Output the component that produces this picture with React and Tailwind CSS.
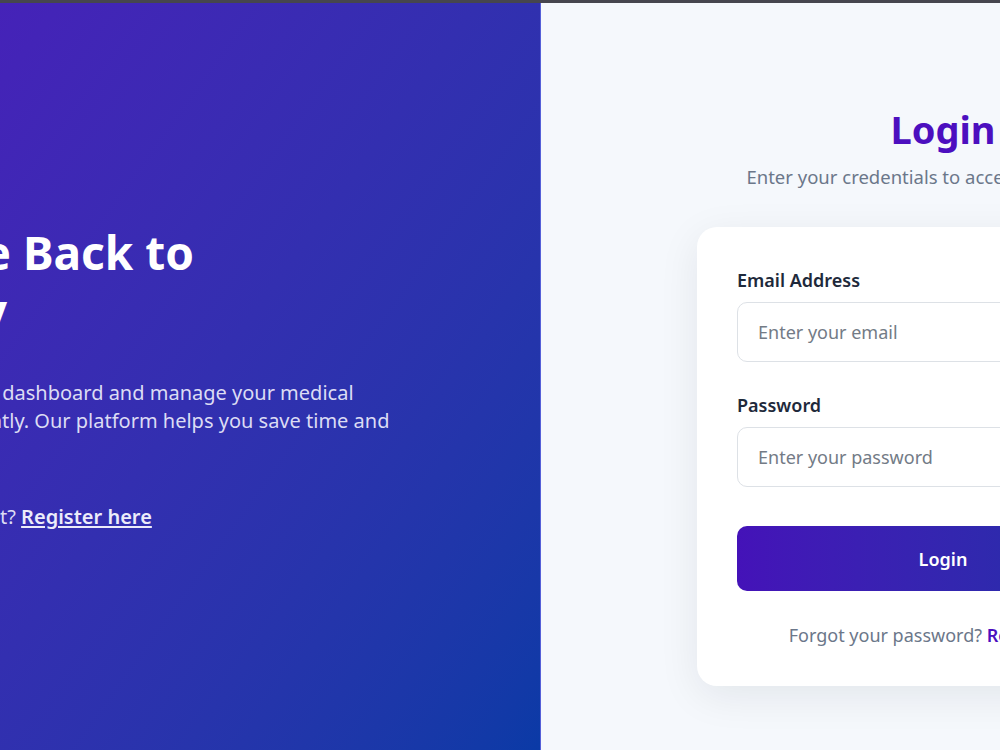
import React from 'react';

export default function App() {
  return (
    <div className="w-[1000px] h-[750px] overflow-hidden flex flex-col font-['Noto_Sans',sans-serif]">
      {/* thin top bar */}
      <div className="h-[3px] shrink-0 bg-[#46464e]" />

      <div className="flex flex-1 min-h-0">
        {/* Left welcome panel */}
        <div className="w-[541px] shrink-0 overflow-hidden flex flex-col justify-center bg-linear-to-br from-[#4522b8] to-[#0a3aa6] border-r border-[#5560d8]">
          <div className="-ml-[300px] text-white whitespace-nowrap">
            <h1 className="text-[46px] font-bold leading-[58px]">
              <div>
                <span className="inline-block w-[311px] text-right">Welcome</span> Back to
              </div>
              <div>
                <span className="inline-block w-[307px] text-right">Pharmacy</span>
              </div>
            </h1>

            <p className="mt-10 text-xl leading-7 text-[#dcdcf4]">
              <span className="block">
                <span className="inline-block w-[297px] text-right">Log in to access your</span> dashboard and manage your medical
              </span>
              <span className="block">
                <span className="inline-block w-[302px] text-right">records efficien</span>tly. Our platform helps you save time and
              </span>
              <span className="block">
                <span className="inline-block w-[296px] text-right">effort.</span>
              </span>
            </p>

            <p className="mt-10 text-xl leading-7 text-[#dcdcf4]">
              <span className="inline-block w-[300px] text-right">Don't have an accoun</span>t?{' '}
              <a href="#" className="font-semibold text-[#ececfa] underline underline-offset-2">
                Register here
              </a>
            </p>
          </div>
        </div>

        {/* Right login panel */}
        <div className="w-[804px] shrink-0 bg-[#f5f8fc] flex flex-col items-center pt-[102px]">
          <h2 className="text-[38px] font-bold leading-[48px] text-[#4c0fbf]">Login</h2>
          <p className="mt-[10px] text-[18.5px] leading-7 text-[#6b778a]">
            Enter your credentials to access your account
          </p>

          <div className="mt-9 w-[492px] bg-white rounded-[20px] shadow-[0_10px_40px_rgba(15,23,42,0.08)] px-10 pt-10 pb-[37px]">
            <label className="block text-lg font-semibold leading-[27px] text-[#1e293b]">Email Address</label>
            <input
              type="email"
              placeholder="Enter your email"
              className="mt-2 block w-full h-[60px] px-5 text-lg rounded-[10px] border border-[#dde1e6] bg-white outline-none placeholder:text-[#737b86]"
            />

            <label className="mt-[30px] block text-lg font-semibold leading-[27px] text-[#1e293b]">Password</label>
            <input
              type="password"
              placeholder="Enter your password"
              className="mt-2 block w-full h-[60px] px-5 text-lg rounded-[10px] border border-[#dde1e6] bg-white outline-none placeholder:text-[#737b86]"
            />

            <button className="mt-[39px] w-full h-[65px] rounded-[10px] bg-linear-to-r from-[#4412b8] to-[#1d31a7] text-white text-lg font-semibold">
              Login
            </button>

            <p className="mt-[30px] text-center text-lg leading-7 text-[#6b778a]">
              Forgot your password?{' '}
              <a href="#" className="font-semibold text-[#4c0fbf]">Reset it here</a>
            </p>
          </div>
        </div>
      </div>
    </div>
  );
}
